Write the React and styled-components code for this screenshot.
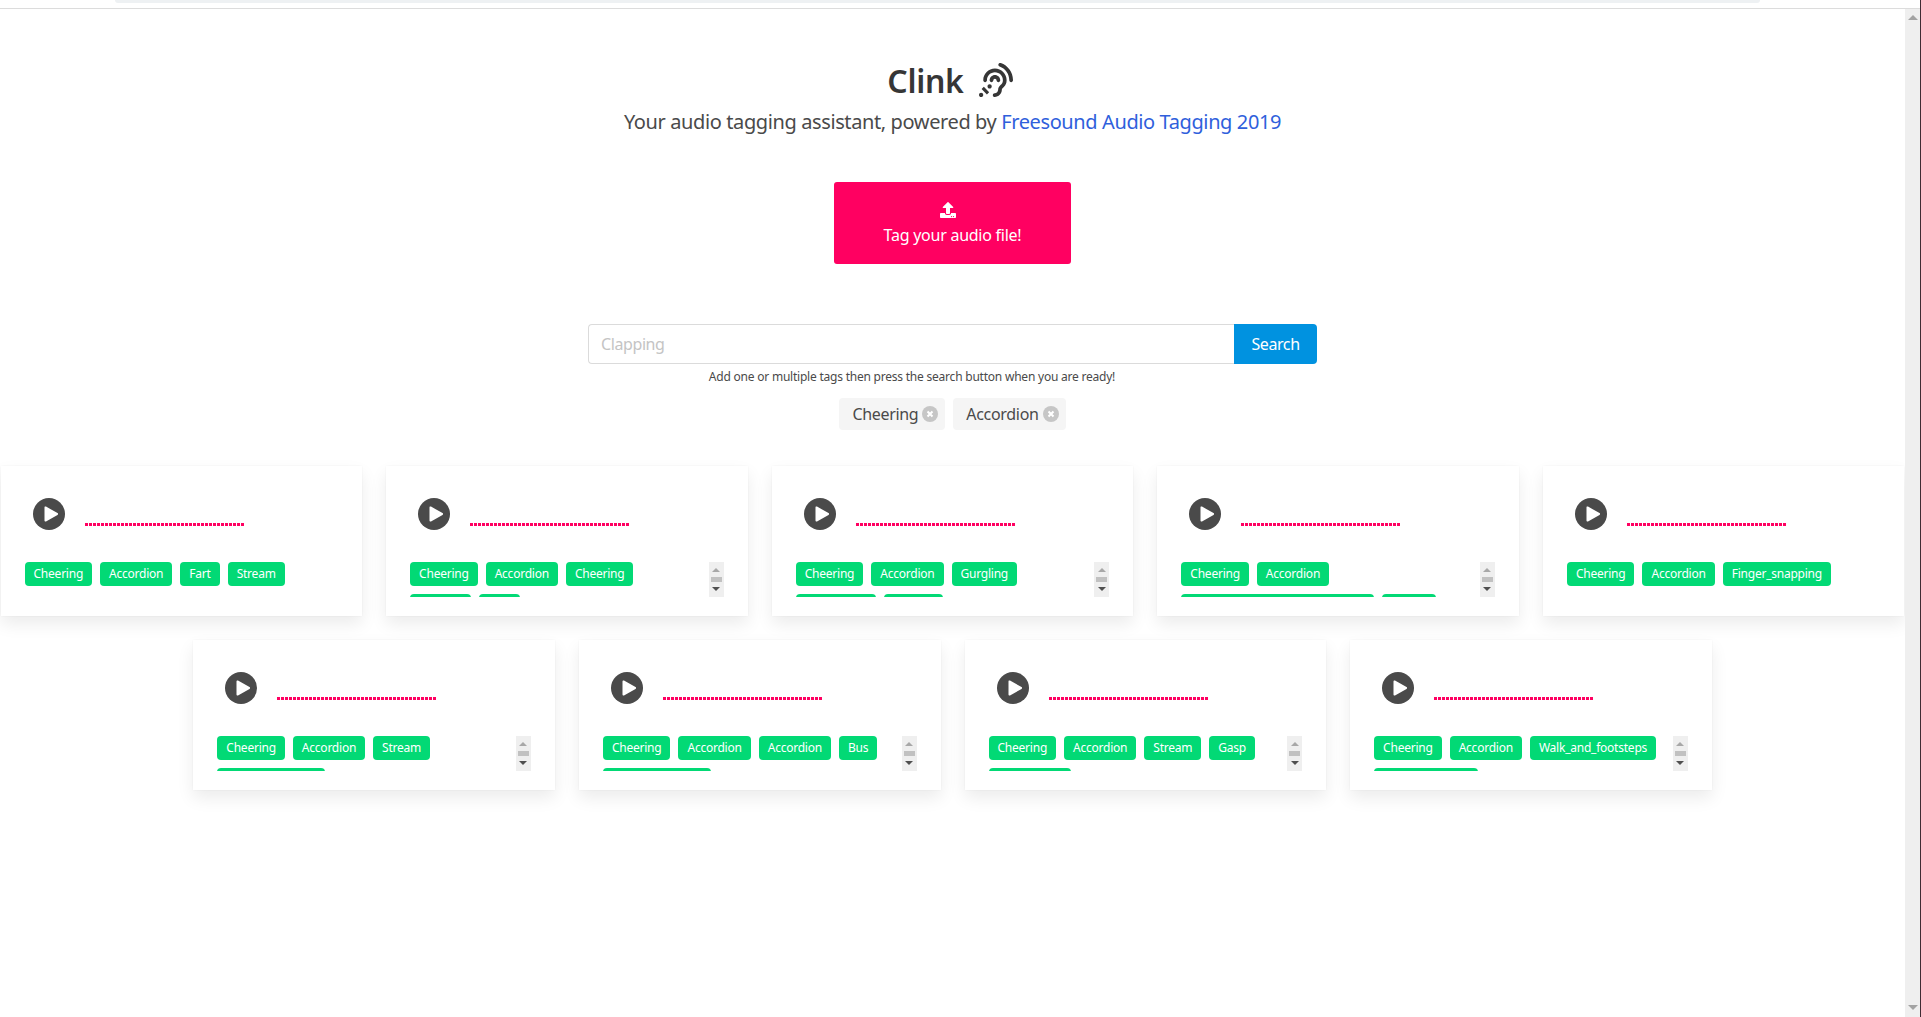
import React from "react";
import styled, { createGlobalStyle } from "styled-components";
import { FaAssistiveListeningSystems, FaUpload } from "react-icons/fa";

const GlobalStyle = createGlobalStyle`
  html, body {
    margin: 0;
    padding: 0;
    height: 100%;
    overflow: hidden;
    background: #fff;
  }
  body {
    font-family: "Noto Sans", "Open Sans", sans-serif;
    color: #4a4a4a;
  }
  * { box-sizing: border-box; }
`;

const Shell = styled.div`
  display: flex;
  flex-direction: column;
  height: 100vh;
  border-right: 1px solid #3f2b33;
`;

const BrowserEdge = styled.div`
  flex: none;
  height: 9px;
  padding: 0 160px 0 115px;
  background: #fff;
  border-bottom: 1px solid #dcdcdc;
`;

const AddressBar = styled.div`
  height: 3px;
  background: #eef1f3;
  border-radius: 0 0 8px 8px;
`;

const Viewport = styled.div`
  flex: 1;
  display: flex;
  min-height: 0;
`;

const Page = styled.main`
  flex: 1;
  min-width: 0;
  overflow: hidden;
  display: flex;
  flex-direction: column;
  align-items: center;
`;

const ScrollTrack = styled.div`
  flex: none;
  width: 15px;
  height: ${(p) => (p.$small ? "35px" : "auto")};
  background: #efefef;
  display: flex;
  flex-direction: column;
  align-items: center;
  justify-content: space-between;
  padding: ${(p) => (p.$small ? "6px 0" : "6px 0 7px")};
`;

const Arrow = styled.div`
  width: 0;
  height: 0;
  border-left: ${(p) => (p.$small ? 4 : 5)}px solid transparent;
  border-right: ${(p) => (p.$small ? 4 : 5)}px solid transparent;
  ${(p) => (p.$down ? "border-top" : "border-bottom")}: ${(p) => (p.$small ? 4 : 5)}px solid ${(p) => p.$color};
`;

const Thumb = styled.div`
  width: 11px;
  height: 5px;
  background: #c1c1c1;
`;

const Title = styled.h1`
  margin: 49px 0 0;
  padding-right: 5px;
  display: flex;
  align-items: center;
  gap: 15px;
  height: 44px;
  font-size: 32px;
  font-weight: 600;
  color: #363636;
  letter-spacing: -0.3px;
`;

const Subtitle = styled.p`
  margin: 5px 0 0;
  font-size: 20px;
  line-height: 30px;
  color: #4a4a4a;
  letter-spacing: -0.39px;
`;

const Link = styled.a`
  color: #2f5fdc;
  text-decoration: none;
`;

const UploadButton = styled.button`
  margin-top: 45px;
  width: 237px;
  height: 82px;
  padding: 2px 0 0;
  border: 0;
  border-radius: 3px;
  background: #ff0061;
  color: #fff;
  font: inherit;
  font-size: 16px;
  letter-spacing: -0.25px;
  display: flex;
  flex-direction: column;
  align-items: center;
  justify-content: center;
  gap: 6px;
  cursor: pointer;
`;

const UploadIcon = styled(FaUpload)`
  margin-right: 10px;
`;

const SearchBlock = styled.div`
  margin-top: 60px;
  width: 729px;
`;

const SearchBar = styled.form`
  display: flex;
  height: 40px;
`;

const SearchInput = styled.input`
  flex: 1;
  min-width: 0;
  padding: 0 12px;
  border: 1px solid #dbdbdb;
  border-right: 0;
  border-radius: 4px 0 0 4px;
  font: inherit;
  font-size: 16px;
  letter-spacing: -0.4px;
  outline: none;
  &::placeholder { color: #c4c4c4; }
`;

const SearchButton = styled.button`
  width: 83px;
  border: 0;
  border-radius: 0 4px 4px 0;
  background: #0092e0;
  color: #fff;
  font: inherit;
  font-size: 16px;
  letter-spacing: -0.4px;
`;

const Help = styled.p`
  margin: 4px 0 0;
  padding-right: 81px;
  text-align: center;
  font-size: 12px;
  line-height: 18px;
  color: #4a4a4a;
  letter-spacing: -0.22px;
`;

const ActiveTags = styled.div`
  margin-top: 12px;
  display: flex;
  gap: 8px;
`;

const ActiveTag = styled.span`
  display: inline-flex;
  align-items: center;
  gap: 4px;
  height: 32px;
  padding: 0 7px 0 13px;
  border-radius: 4px;
  background: #f5f5f5;
  font-size: 16px;
  letter-spacing: -0.32px;
`;

const Remove = styled.svg`
  width: 16px;
  height: 16px;
  flex: none;
`;

const CardRow = styled.section`
  align-self: stretch;
  display: flex;
  justify-content: center;
  gap: 24px;
  margin-top: ${(p) => p.$top}px;
`;

const Card = styled.article`
  flex: none;
  width: 361.6px;
  height: 150px;
  padding: 32px 24px 0;
  background: #fff;
  box-shadow: 0 8px 16px rgba(0, 0, 0, 0.08), 0 0 2px rgba(0, 0, 0, 0.05);
`;

const Player = styled.div`
  display: flex;
  align-items: flex-start;
  height: 32px;
  padding-left: 8px;
`;

const PlayIcon = styled.svg`
  width: 32px;
  height: 32px;
  flex: none;
`;

const Wave = styled.div`
  width: 159px;
  height: 3px;
  margin: 25px 0 0 20px;
  background: repeating-linear-gradient(to right, #ff0061 0 3px, transparent 3px 4px);
`;

const TagArea = styled.div`
  margin-top: 32px;
  display: flex;
  justify-content: space-between;
`;

const TagList = styled.div`
  flex: 1;
  min-width: 0;
  height: 35px;
  padding-right: 10px;
  overflow: hidden;
  display: flex;
  flex-wrap: wrap;
  align-content: flex-start;
  gap: 8px;
`;

const Chip = styled.span`
  height: 24px;
  padding: 0 9px;
  width: ${(p) => (p.$width ? `${p.$width}px` : "auto")};
  overflow: hidden;
  border-radius: 4px;
  background: #02d975;
  color: #fff;
  font-size: 12px;
  line-height: 24px;
  letter-spacing: -0.23px;
  white-space: nowrap;
`;

const row1 = [
  { tags: [["Cheering"], ["Accordion"], ["Fart"], ["Stream"]] },
  { tags: [["Cheering"], ["Accordion"], ["Cheering"], ["Applause", 61], ["Bark", 41]], scroll: true },
  { tags: [["Cheering"], ["Accordion"], ["Gurgling"], ["Crackle", 80], ["Hiss", 59]], scroll: true },
  { tags: [["Cheering"], ["Accordion"], ["Bathtub_(filling_or_washing)", 193], ["Bark", 54]], scroll: true },
  { tags: [["Cheering"], ["Accordion"], ["Finger_snapping"]] },
];

const row2 = [
  { tags: [["Cheering"], ["Accordion"], ["Stream"], ["Walk_and_footsteps", 108]], scroll: true },
  { tags: [["Cheering"], ["Accordion"], ["Accordion"], ["Bus"], ["Walk_and_footsteps", 108]], scroll: true },
  { tags: [["Cheering"], ["Accordion"], ["Stream"], ["Gasp"], ["Keys_jangling", 82]], scroll: true },
  { tags: [["Cheering"], ["Accordion"], ["Walk_and_footsteps"], ["Drawer_open", 104]], scroll: true },
];

const TrackCard = ({ tags, scroll }) => (
  <Card>
    <Player>
      <PlayIcon viewBox="0 0 32 32">
        <circle cx="16" cy="16" r="16" fill="#4a4a4a" />
        <path d="M11.5 9.5a1 1 0 0 1 1.5-.9l11.5 6.5a1 1 0 0 1 0 1.8L13 23.4a1 1 0 0 1-1.5-.9z" fill="#fff" />
      </PlayIcon>
      <Wave />
    </Player>
    <TagArea>
      <TagList>
        {tags.map(([label, width], i) => (
          <Chip key={i} $width={width}>{label}</Chip>
        ))}
      </TagList>
      {scroll && (
        <ScrollTrack $small>
          <Arrow $small $color="#a8a8a8" />
          <Thumb />
          <Arrow $small $down $color="#505050" />
        </ScrollTrack>
      )}
    </TagArea>
  </Card>
);

const RemoveIcon = () => (
  <Remove viewBox="0 0 16 16">
    <circle cx="8" cy="8" r="8" fill="#c6c6c6" />
    <path d="M5.5 5.5l5 5M10.5 5.5l-5 5" stroke="#fff" strokeWidth="2" />
  </Remove>
);

export default function App() {
  return (
    <Shell>
      <GlobalStyle />
      <BrowserEdge>
        <AddressBar />
      </BrowserEdge>
      <Viewport>
        <Page>
          <Title>
            Clink
            <FaAssistiveListeningSystems size={34} />
          </Title>
          <Subtitle>
            Your audio tagging assistant, powered by <Link href="#">Freesound Audio Tagging 2019</Link>
          </Subtitle>
          <UploadButton>
            <UploadIcon size={16} />
            Tag your audio file!
          </UploadButton>
          <SearchBlock>
            <SearchBar>
              <SearchInput placeholder="Clapping" />
              <SearchButton type="button">Search</SearchButton>
            </SearchBar>
            <Help>Add one or multiple tags then press the search button when you are ready!</Help>
          </SearchBlock>
          <ActiveTags>
            <ActiveTag>Cheering <RemoveIcon /></ActiveTag>
            <ActiveTag>Accordion <RemoveIcon /></ActiveTag>
          </ActiveTags>
          <CardRow $top={36}>
            {row1.map((c, i) => <TrackCard key={i} {...c} />)}
          </CardRow>
          <CardRow $top={24}>
            {row2.map((c, i) => <TrackCard key={i} {...c} />)}
          </CardRow>
        </Page>
        <ScrollTrack>
          <Arrow $color="#a3a3a3" />
          <Arrow $down $color="#a3a3a3" />
        </ScrollTrack>
      </Viewport>
    </Shell>
  );
}
